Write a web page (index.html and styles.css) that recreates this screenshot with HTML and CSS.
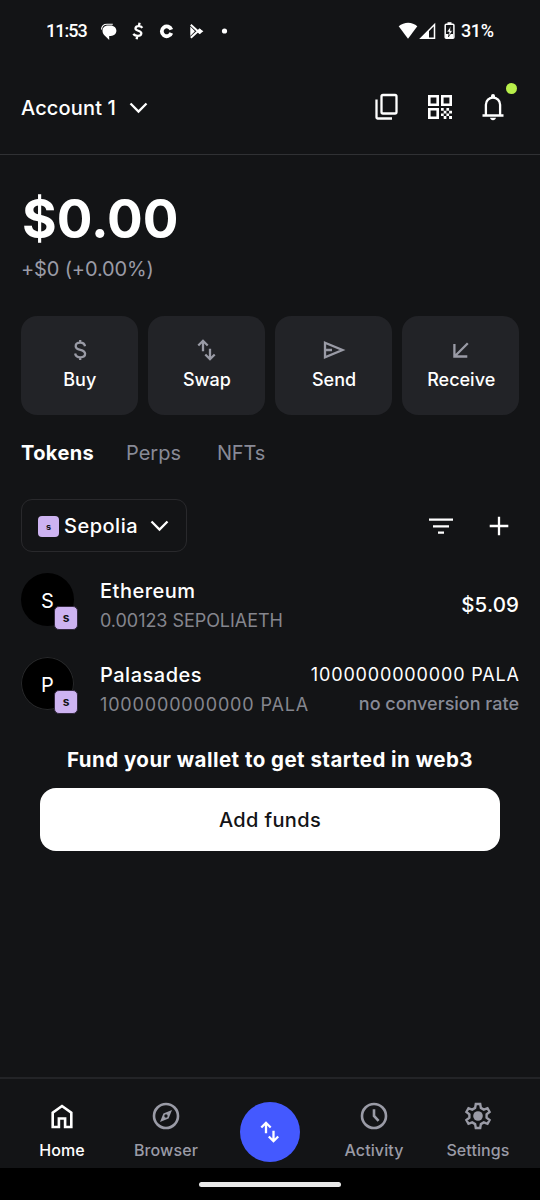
FILE: index.html
```html
<!DOCTYPE html>
<html lang="en">
<head>
<meta charset="utf-8">
<title>Wallet</title>
<link rel="stylesheet" href="styles.css">
</head>
<body>
<div class="phone">
  <div class="status">
    <span class="clock">11:53</span>
    <svg class="notifications" width="130" height="20" viewBox="0 0 130 20" fill="#fff">
      <path d="M8 4.500h2.600c3.300 0 5.800 2.300 5.800 5.200 0 3-2.500 5.200-5.600 5.200H9.200v4L5.400 15.200C3.500 13.800 2.500 11.800 2.500 9.700 2.500 6.700 4.800 4.500 8 4.500z"/>
      <path d="M1.500 8.500C1.700 5.200 3.800 3.300 7 3.300h5.800" fill="none" stroke="#fff" stroke-width="1.100"/>
      <path d="M42.300 6.800C40.800 4.600 36 4.500 35.500 7.300 35 10.300 41.800 9.200 41.300 12.600 40.800 15.700 34.800 15.600 33.500 12.800M39.600 1.800l-.7 3M37.300 15l-.7 3.200" fill="none" stroke="#fff" stroke-width="2.300"/>
      <path d="M71.300 8.700A4.900 4.900 0 1 0 71.300 12" fill="none" stroke="#fff" stroke-width="3.800"/>
      <path d="M90.800 3.800L100.300 12.600M90.800 16.800L100.300 8" fill="none" stroke="#fff" stroke-width="2"/>
      <path d="M90.300 5.500l4.600 4.800-4.600 4.800zM97.500 10.300l2.600-2.400 3.300 2.400-3.300 2.400z"/>
      <circle cx="124.500" cy="10" r="2.600"/>
    </svg>
    <svg class="signals" width="60" height="20" viewBox="0 0 60 20" fill="#fff">
      <path d="M.7 5.200C6 .5 14.300.5 19.300 5.200L10 17.700z"/>
      <path d="M36.500 3.500v13.800H23z" fill="none" stroke="#fff" stroke-width="1.500"/>
      <path d="M22 18l9-9.200V18z"/>
      <path d="M49.500 1.200h4v2h-4z"/>
      <rect x="47.200" y="3.300" width="8.700" height="14" rx="1" fill="none" stroke="#fff" stroke-width="1.500"/>
      <path d="M48 13h7v4h-7z"/>
      <path d="M53 4.700L48.700 11h2.400l-.7 5 4.200-6.400h-2.200z" stroke="#131416" stroke-width=".7"/>
    </svg>
    <span class="battery">31%</span>
  </div>

  <header class="header">
    <button class="account"><span class="account-name">Account 1</span>
      <svg width="19" height="12" viewBox="0 0 19 12" class="line"><path d="M1.500 1.500l8 8 8-8"/></svg>
    </button>
    <div class="header-actions">
      <svg width="26" height="28" viewBox="0 0 26 28" class="line">
        <rect x="7.500" y="2" width="15" height="18.500" rx="1.500"/><path d="M2.500 6.500v18a1 1 0 0 0 1 1h14.500"/>
      </svg>
      <svg width="26" height="26" viewBox="0 0 26 26" fill="#fff">
        <path fill-rule="evenodd" d="M1 1h11v11H1zm2.600 2.600v5.800h5.800V3.600zM14 1h11v11H14zm2.600 2.600v5.800h5.800V3.600zM1 14h11v11H1zm2.600 2.600v5.800h5.800v-5.800z"/>
        <path d="M14 14h2.700v2.700H14zM19.400 14h2.700v2.700h-2.700zM16.700 16.700h2.700v2.700h-2.700zM22.100 16.700H25v2.700h-2.900zM14 19.400h2.700v2.700H14zM19.400 19.400h2.700v2.700h-2.700zM16.700 22.100h2.700V25h-2.700zM22.100 22.100H25V25h-2.900z"/>
      </svg>
      <span class="bell">
        <svg width="24" height="28" viewBox="0 0 24 28">
          <path d="M1.500 22.500h21M4.900 22.500V11.700a7.100 7.100 0 0 1 14.200 0v10.800" fill="none" stroke="#fff" stroke-width="2.300"/>
          <path d="M10 4V2.900a2 2 0 0 1 4 0V4zM9 24.800h6c-.4 1.600-1.400 2.400-3 2.400s-2.600-.8-3-2.400z" fill="#fff"/>
        </svg>
        <i class="bell-dot"></i>
      </span>
    </div>
  </header>

  <main class="main">
    <h1 class="balance">$0.00</h1>
    <p class="change">+$0 (+0.00%)</p>

    <div class="actions">
      <button class="action">
        <svg width="24" height="24" viewBox="0 0 24 24" class="line muted"><path d="M17 8.200C16.600 6 14.800 4.700 12.200 4.700 9.500 4.700 7.700 6 7.700 8.200c0 5 9.400 2.400 9.400 7.600 0 2.200-1.900 3.500-4.700 3.500-2.900 0-4.800-1.400-5.300-3.800M12.200 2v3M12.200 19v3"/></svg>
        <span>Buy</span></button>
      <button class="action">
        <svg width="24" height="24" viewBox="0 0 24 24" class="line muted"><path d="M8 13.200V3.500M3.300 7.500L8 2.800l4.700 4.700M15 10.800v9.700M10.300 16.500l4.700 4.700 4.700-4.700"/></svg>
        <span>Swap</span></button>
      <button class="action">
        <svg width="24" height="24" viewBox="0 0 24 24" class="line muted"><path d="M3 4.700L20.500 12 3 19.300zM3 12h7"/></svg>
        <span>Send</span></button>
      <button class="action">
        <svg width="24" height="24" viewBox="0 0 24 24" class="line muted"><path d="M18.800 5.200L5.800 18.200M5.400 6v12.500h12.900"/></svg>
        <span>Receive</span></button>
    </div>

    <nav class="tabs">
      <span class="tab-on">Tokens</span><span class="perps">Perps</span><span class="nfts">NFTs</span>
    </nav>

    <div class="filters">
      <button class="network"><i class="net net-plain">s</i><span class="network-name">Sepolia</span>
        <svg width="19" height="12" viewBox="0 0 19 12" class="line"><path d="M1.500 1.500l8 8 8-8"/></svg>
      </button>
      <div class="filter-actions">
        <svg width="26" height="20" viewBox="0 0 26 20" class="line"><path d="M1 3.700h24M5 10.300h16M10 16.700h6"/></svg>
        <svg width="20" height="20" viewBox="0 0 20 20" class="line"><path d="M10 .7v18.600M.7 10h18.600"/></svg>
      </div>
    </div>

    <div class="token">
      <div class="avatar">S<i class="net net-badge">s</i></div>
      <div class="info"><b class="name">Ethereum</b><span class="amount amount-eth">0.00123 SEPOLIAETH</span></div>
      <div class="value"><b class="price">$5.09</b></div>
    </div>
    <div class="token">
      <div class="avatar avatar-ring">P<i class="net net-badge">s</i></div>
      <div class="info"><b class="name">Palasades</b><span class="amount amount-pala">1000000000000 PALA</span></div>
      <div class="value value-top"><span class="quantity">1000000000000 PALA</span><span class="rate">no conversion rate</span></div>
    </div>

    <h2 class="fund">Fund your wallet to get started in web3</h2>
    <button class="add">Add funds</button>
  </main>

  <nav class="bottom">
    <div class="item item-on">
      <svg width="28" height="28" viewBox="0 0 28 28" class="line thick"><path d="M4.700 25V10.700L14 4l9.300 6.700V25h-6.200v-8.500h-6.200V25z"/></svg>
      <span>Home</span></div>
    <div class="item">
      <svg width="28" height="28" viewBox="0 0 28 28" class="line thick muted"><circle cx="14" cy="14" r="12"/><path fill="#9a9ba6" fill-rule="evenodd" stroke="none" d="M20 8l-3.400 8.600L8 20l3.400-8.600zM14 12.300a1.700 1.700 0 1 0 0 3.400 1.700 1.700 0 0 0 0-3.400z"/></svg>
      <span>Browser</span></div>
    <div class="trade">
      <svg width="24" height="24" viewBox="0 0 24 24" class="line"><path d="M8 13.200V3.500M3.300 7.500L8 2.800l4.700 4.700M15.500 10.800v9.700M10.800 16.500l4.700 4.700 4.700-4.700"/></svg>
    </div>
    <div class="item">
      <svg width="28" height="28" viewBox="0 0 28 28" class="line thick muted"><circle cx="14" cy="14" r="12"/><path d="M14 7.300V14l4.600 4.900"/></svg>
      <span>Activity</span></div>
    <div class="item">
      <svg width="28" height="28" viewBox="0 0 28 28" class="line gear muted"><path d="M11.800 2h4.400l.7 3.900 2.900 1.700 3.700-1.400 2.100 3.700-3 2.500v3.200l3 2.500-2.100 3.700-3.700-1.400-2.900 1.700-.7 3.900h-4.400l-.7-3.900-2.900-1.700-3.700 1.400-2.100-3.700 3-2.500v-3.200l-3-2.500 2.100-3.700 3.700 1.400 2.900-1.700z"/><circle cx="14" cy="14" r="4.800" fill="#9a9ba6" stroke="none"/></svg>
      <span>Settings</span></div>
  </nav>
  <div class="gesture"><i class="pill"></i></div>
</div>
</body>
</html>
```
FILE: styles.css
```css
* { box-sizing: border-box; }
body { margin: 0; background: #131416; }
button { border: 0; padding: 0; background: none; color: inherit; font: inherit; }
i { font-style: normal; }
svg { display: block; flex: none; }
span, b, h1, h2, p { white-space: nowrap; }
.phone { width: 540px; height: 1200px; display: flex; flex-direction: column; overflow: hidden; background: #131416; color: #fff; font-family: Inter, "Liberation Sans", sans-serif; }
.line { fill: none; stroke: #fff; stroke-width: 2.3; }
.thick { stroke-width: 2.6; }
.gear { stroke-width: 2.4; }
.muted { stroke: #9a9ba6; }

.status { height: 62px; padding: 0 46px; display: flex; align-items: center; font: 500 18px/20px Roboto, sans-serif; }
.clock { width: 41px; letter-spacing: -1px; }
.notifications { margin-left: 13px; }
.signals { margin-left: auto; }
.battery { margin-left: 3px; width: 33px; letter-spacing: -.4px; }

.header { height: 93px; padding: 0 21px; border-bottom: 1px solid #303134; display: flex; align-items: center; justify-content: space-between; }
.account { display: flex; align-items: center; gap: 12px; font-size: 20px; font-weight: 500; letter-spacing: .15px; }
.account-name { width: 96px; text-align: left; }
.header-actions { display: flex; align-items: center; gap: 27px; padding: 0 14px 2px 0; }
.bell { position: relative; margin-left: 1px; }
.bell-dot { position: absolute; left: 25px; top: -10px; width: 11px; height: 11px; border-radius: 50%; background: #b8ef4a; }

.main { flex: 1; padding: 34px 21px 0; }
.balance { margin: 0 0 0 1px; font-size: 53px; line-height: 60px; font-weight: 700; }
.change { margin: 7px 0 0; font-size: 20px; line-height: 26px; letter-spacing: -.15px; color: #9a9ba6; }
.actions { margin-top: 34px; display: grid; grid-template-columns: repeat(4, 1fr); gap: 10.500px; }
.action { height: 99px; border-radius: 16px; background: #222327; display: flex; flex-direction: column; align-items: center; padding: 22px 0 0 1px; font-size: 18px; line-height: 24px; font-weight: 500; }
.action span { margin-top: 6px; }
.tabs { margin-top: 23px; height: 30px; display: flex; align-items: center; font-size: 20px; color: #888a96; }
.tab-on { width: 105px; color: #fff; font-weight: 700; letter-spacing: .4px; }
.perps { width: 91px; }
.nfts { letter-spacing: -.2px; }
.filters { margin-top: 31px; height: 53px; display: flex; justify-content: space-between; align-items: center; }
.network { width: 166px; height: 53px; padding: 1px 0 0 16px; border: 1.500px solid #29292c; border-radius: 11px; display: flex; align-items: center; font-size: 20px; font-weight: 500; letter-spacing: .5px; }
.network-name { width: 74px; margin: 0 12px 0 5px; text-align: left; }
.net { display: flex; align-items: center; justify-content: center; background: #cdb3f1; color: #131416; font-weight: 700; letter-spacing: 0; }
.net-plain { width: 21px; height: 21px; border-radius: 4px; font-size: 9px; }
.net-badge { position: absolute; left: 33px; top: 33px; width: 24px; height: 24px; border-radius: 5px; font-size: 12px; border: 1px solid #33283e; line-height: 1; }
.filter-actions { display: flex; align-items: center; gap: 35px; padding-right: 10px; }
.token { height: 84px; padding-top: 21px; display: flex; }
.avatar { position: relative; flex: none; width: 53px; height: 53px; border-radius: 50%; background: #000; display: flex; align-items: center; justify-content: center; font-size: 20px; padding-top: 2px; }
.avatar-ring { box-shadow: inset 0 0 0 1px #27282a; }
.info { margin-left: 26px; height: 63px; display: flex; flex-direction: column; align-items: flex-start; padding-top: 5px; }
.name { font-size: 20px; line-height: 26px; font-weight: 500; letter-spacing: .5px; }
.amount { margin-top: 5px; font-size: 18px; line-height: 24px; color: #85868e; }
.amount-eth { letter-spacing: -.05px; }
.amount-pala { letter-spacing: .84px; }
.value { margin-left: auto; height: 63px; padding-top: 19px; display: flex; flex-direction: column; align-items: flex-end; }
.value-top { padding-top: 6px; }
.price { font-size: 20.500px; line-height: 26px; font-weight: 500; letter-spacing: .1px; }
.quantity { font-size: 18px; line-height: 24px; letter-spacing: .84px; margin-right: -.8px; }
.rate { margin-top: 5px; font-size: 18px; line-height: 24px; font-weight: 500; color: #888a96; }
.fund { margin: 27px 0 0; font-size: 20.500px; line-height: 26px; font-weight: 700; letter-spacing: .46px; text-align: center; }
.add { display: block; width: 460px; height: 63px; margin: 15px auto 0 19px; border-radius: 16px; background: #fff; color: #131416; font-size: 20px; font-weight: 500; letter-spacing: .35px; text-align: center; }

.bottom { height: 91px; border-top: 2px solid #232427; padding: 0 10px; display: grid; grid-template-columns: repeat(5, 1fr); }
.item { display: flex; flex-direction: column; align-items: center; padding-top: 23px; font-size: 16px; line-height: 20px; font-weight: 500; letter-spacing: .1px; color: #9a9ba6; }
.item span { margin-top: 10px; }
.item-on { color: #fff; }
.trade { width: 60px; height: 60px; margin: 23px auto 0; border-radius: 50%; background: #4459ff; display: flex; align-items: center; justify-content: center; }
.gesture { height: 32px; background: #000; display: flex; justify-content: center; padding-top: 14px; }
.pill { width: 142px; height: 5px; border-radius: 3px; background: #e9e9e9; }
```
